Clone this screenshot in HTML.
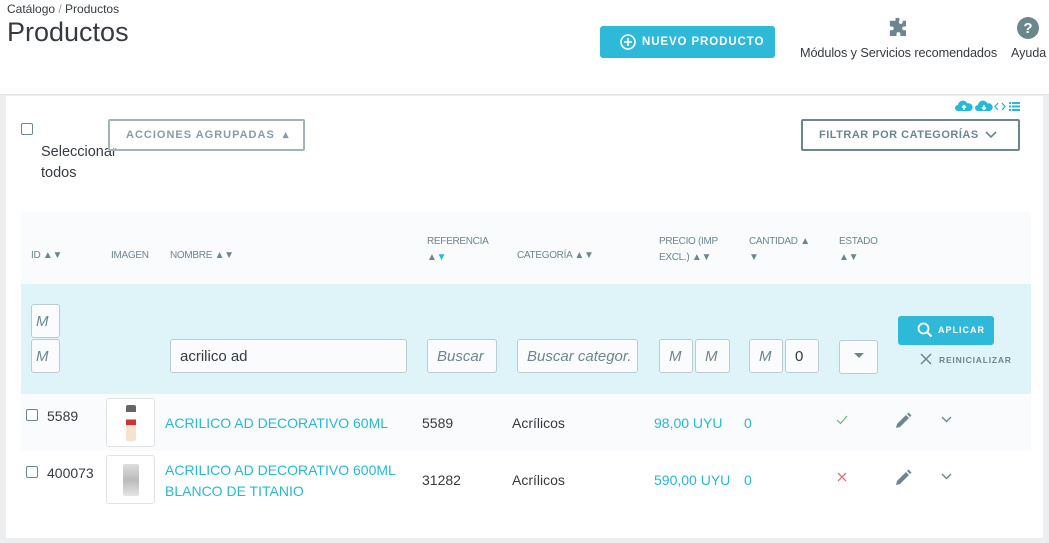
<!DOCTYPE html>
<html><head><meta charset="utf-8"><style>
*{box-sizing:border-box;margin:0;padding:0}
body{width:1049px;height:543px;overflow:hidden;background:#eceef0;font-family:"Liberation Sans",sans-serif;position:relative;color:#363a41}
.a{position:absolute}
.hdr{left:0;top:0;width:1049px;height:95px;background:#fff;border-bottom:1px solid #dfe3e6}
.card{left:6px;top:96px;width:1037px;height:442px;background:#fff}
.th{font-size:10px;color:#6c868e;letter-spacing:-0.3px}
.inp{background:#fafbfc;border:1px solid #bbcdd2;border-radius:3px;height:34px;font-size:15px;font-style:italic;color:#6c868e;padding:8px 9px;overflow:hidden;white-space:nowrap}
.lnk{color:#25b9d7;font-size:14px}
.cell{font-size:14px;color:#363a41}
.cb{width:12px;height:12px;border:1px solid #6c868e;border-radius:2px;background:#fff}
.thumb{width:49px;height:49px;border:1px solid #dfe3e6;border-radius:3px;background:#fff}
</style></head><body>
<div class="a hdr"></div>
<div class="a" style="left:7px;top:2px;font-size:12px;color:#363a41">Catálogo <span style="color:#999">/</span> Productos</div>
<div class="a" style="left:7px;top:17px;font-size:27px;color:#363a41">Productos</div>
<div class="a" style="left:600px;top:26px;width:175px;height:32px;background:#2eb9d8;border-radius:3px;color:#fff;font-size:11.5px;font-weight:bold;letter-spacing:0.9px;line-height:32px;padding-left:42px">NUEVO PRODUCTO</div>
<svg class="a" style="left:620px;top:34px" width="16" height="16" viewBox="0 0 16 16"><circle cx="8" cy="8" r="7" fill="none" stroke="#fff" stroke-width="1.6"/><path d="M8 4v8M4 8h8" stroke="#fff" stroke-width="1.6"/></svg>
<svg class="a" style="left:887px;top:16px" width="24" height="24" viewBox="0 0 24 24"><path d="M9 2h4v3a2 2 0 1 0 3 0V5h4v6h-2a2 2 0 1 0 0 4h2v6h-6v-2a2 2 0 1 0-4 0v2H3v-6h2a2 2 0 1 0 0-4H3V5h6z" fill="#6c868e" transform="scale(0.95)"/></svg>
<div class="a" style="left:800px;top:46px;font-size:12.7px;color:#363a41;letter-spacing:-0.1px">Módulos y Servicios recomendados</div>
<svg class="a" style="left:1017px;top:17px" width="22" height="22" viewBox="0 0 22 22"><circle cx="11" cy="11" r="11" fill="#6c868e"/><text x="11" y="16" text-anchor="middle" font-size="15" font-weight="bold" fill="#fff" font-family="Liberation Sans">?</text></svg>
<div class="a" style="left:1011px;top:46px;font-size:12.5px;color:#363a41">Ayuda</div>

<div class="a card"></div>
<svg class="a" style="left:955px;top:99px" width="76" height="14" viewBox="0 0 76 14">
<path d="M3 12a3 3 0 0 1 0-6 5 5 0 0 1 9.5-1.5A3.5 3.5 0 0 1 15 12z" fill="#25b9d7"/><path d="M9 11V7M7 8.5l2-2 2 2" stroke="#fff" stroke-width="1.4" fill="none"/>
<path d="M23 12a3 3 0 0 1 0-6 5 5 0 0 1 9.5-1.5A3.5 3.5 0 0 1 35 12z" fill="#25b9d7"/><path d="M29 6v4M27 8.5l2 2 2-2" stroke="#fff" stroke-width="1.4" fill="none"/>
<path d="M43 4l-3 3.5 3 3.5M47 4l3 3.5-3 3.5" stroke="#25b9d7" stroke-width="1.3" fill="none"/>
<path d="M54 3h2v2h-2zM57 3h8v2h-8zM54 6.5h2v2h-2zM57 6.5h8v2h-8zM54 10h2v2h-2zM57 10h8v2h-8z" fill="#25b9d7"/></svg>
<div class="a cb" style="left:21px;top:123px"></div>
<div class="a" style="left:41px;top:142px;font-size:14.5px;line-height:21px;color:#363a41">Seleccionar<br>todos</div>
<div class="a" style="left:108px;top:119px;width:197px;height:32px;border:2px solid #a2b3b9;border-radius:2px;color:#8a9ca2;font-size:11px;font-weight:bold;letter-spacing:1px;line-height:28px;padding-left:16px;background:rgba(255,255,255,0.6)">ACCIONES AGRUPADAS &nbsp;▴</div>
<div class="a" style="left:801px;top:119px;width:219px;height:32px;border:2px solid #6c868e;border-radius:2px;color:#6c868e;font-size:11px;font-weight:bold;letter-spacing:0.5px;line-height:28px;padding-left:16px">FILTRAR POR CATEGORÍAS</div>
<svg class="a" style="left:985px;top:130px" width="12" height="10" viewBox="0 0 12 10"><path d="M1 2l5 5 5-5" stroke="#6c868e" stroke-width="1.6" fill="none"/></svg>

<div class="a" style="left:21px;top:212px;width:1010px;height:72px;background:#fafbfc"></div>
<div class="a th" style="left:31px;top:250px">ID ▲▼</div>
<div class="a th" style="left:111px;top:250px">IMAGEN</div>
<div class="a th" style="left:170px;top:250px">NOMBRE ▲▼</div>
<div class="a th" style="left:427px;top:234px;line-height:16px">REFERENCIA<br>▲<span style="color:#25b9d7">▼</span></div>
<div class="a th" style="left:517px;top:250px">CATEGORÍA ▲▼</div>
<div class="a th" style="left:659px;top:234px;line-height:16px">PRECIO (IMP<br>EXCL.) ▲▼</div>
<div class="a th" style="left:749px;top:234px;line-height:16px">CANTIDAD ▲<br>▼</div>
<div class="a th" style="left:839px;top:234px;line-height:16px">ESTADO<br>▲▼</div>

<div class="a" style="left:21px;top:284px;width:1010px;height:110px;background:#dff4f9"></div>
<div class="a inp" style="left:31px;top:304px;width:29px;padding:8px 4px">M</div>
<div class="a inp" style="left:31px;top:339px;width:29px;padding:8px 4px">M</div>
<div class="a inp" style="left:170px;top:339px;width:237px;font-style:normal;color:#363a41;font-size:15px">acrilico ad</div>
<div class="a inp" style="left:427px;top:339px;width:70px">Buscar</div>
<div class="a inp" style="left:517px;top:339px;width:121px">Buscar categor.</div>
<div class="a inp" style="left:659px;top:339px;width:34px">M</div>
<div class="a inp" style="left:695px;top:339px;width:35px">M</div>
<div class="a inp" style="left:749px;top:339px;width:34px">M</div>
<div class="a inp" style="left:785px;top:339px;width:34px;font-style:normal;color:#363a41">0</div>
<div class="a inp" style="left:839px;top:340px;width:39px"></div>
<svg class="a" style="left:854px;top:353px" width="10" height="6"><path d="M0 0h10L5 5z" fill="#6c868e"/></svg>
<div class="a" style="left:898px;top:316px;width:96px;height:29px;background:#2eb9d8;border-radius:3px;color:#fff;font-size:9px;font-weight:bold;letter-spacing:1px;line-height:29px;padding-left:40px">APLICAR</div>
<svg class="a" style="left:917px;top:322px" width="16" height="16" viewBox="0 0 16 16"><circle cx="6.5" cy="6.5" r="5" fill="none" stroke="#fff" stroke-width="1.8"/><path d="M10 10l4.5 4.5" stroke="#fff" stroke-width="2"/></svg>
<svg class="a" style="left:920px;top:353px" width="12" height="12"><path d="M1 1l10 10M11 1L1 11" stroke="#6c868e" stroke-width="1.5"/></svg>
<div class="a" style="left:939px;top:355px;font-size:8.5px;color:#6c868e;font-weight:bold;letter-spacing:0.8px">REINICIALIZAR</div>

<div class="a" style="left:21px;top:394px;width:1010px;height:57px;background:#fafbfc"></div>
<div class="a cb" style="left:26px;top:409px"></div>
<div class="a cell" style="left:47px;top:408px">5589</div>
<div class="a thumb" style="left:106px;top:398px"><div style="margin:6px auto;width:10px;height:36px;background:linear-gradient(#666 0 20%,#fff 20% 40%,#c33 40% 55%,#f4e3cf 55%);border-radius:2px"></div></div>
<div class="a lnk" style="left:165px;top:415px">ACRILICO AD DECORATIVO 60ML</div>
<div class="a cell" style="left:422px;top:415px">5589</div>
<div class="a cell" style="left:512px;top:415px">Acrílicos</div>
<div class="a lnk" style="left:654px;top:415px">98,00 UYU</div>
<div class="a lnk" style="left:744px;top:415px">0</div>
<svg class="a" style="left:836px;top:415px" width="12" height="10"><path d="M1 5l3.5 3.5L11 1" stroke="#70b580" stroke-width="1.2" fill="none"/></svg>
<svg class="a" style="left:894px;top:412px" width="18" height="18" viewBox="0 0 18 18"><path d="M2 16l1-4L12 3l3 3-9 9z" fill="#6c868e"/><path d="M13 2l1.5-1.5 3 3L16 5z" fill="#6c868e"/></svg>
<svg class="a" style="left:941px;top:416px" width="11" height="7"><path d="M1 1l4.5 4.5L10 1" stroke="#6c868e" stroke-width="1.4" fill="none"/></svg>

<div class="a cb" style="left:26px;top:466px"></div>
<div class="a cell" style="left:47px;top:465px">400073</div>
<div class="a thumb" style="left:106px;top:455px"><div style="margin:8px auto;width:16px;height:32px;background:linear-gradient(#ddd,#bbb 50%,#e5e5e5);border-radius:2px"></div></div>
<div class="a lnk" style="left:165px;top:460px;line-height:21px">ACRILICO AD DECORATIVO 600ML<br>BLANCO DE TITANIO</div>
<div class="a cell" style="left:422px;top:472px">31282</div>
<div class="a cell" style="left:512px;top:472px">Acrílicos</div>
<div class="a lnk" style="left:654px;top:472px">590,00 UYU</div>
<div class="a lnk" style="left:744px;top:472px">0</div>
<svg class="a" style="left:837px;top:472px" width="10" height="10"><path d="M1 1l8 8M9 1L1 9" stroke="#e0707a" stroke-width="1.3"/></svg>
<svg class="a" style="left:894px;top:469px" width="18" height="18" viewBox="0 0 18 18"><path d="M2 16l1-4L12 3l3 3-9 9z" fill="#6c868e"/><path d="M13 2l1.5-1.5 3 3L16 5z" fill="#6c868e"/></svg>
<svg class="a" style="left:941px;top:473px" width="11" height="7"><path d="M1 1l4.5 4.5L10 1" stroke="#6c868e" stroke-width="1.4" fill="none"/></svg>
</body></html>
